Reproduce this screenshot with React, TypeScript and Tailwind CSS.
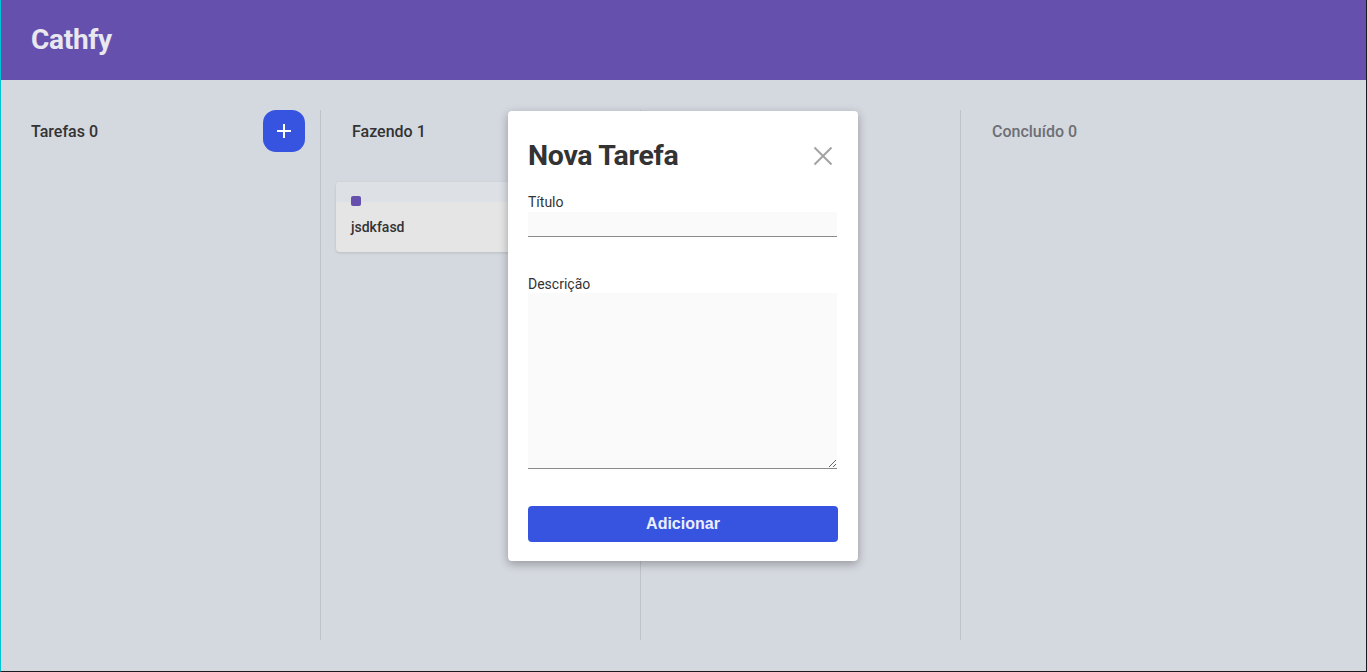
import React, { useState } from "react";

interface Task {
  id: string;
  title: string;
}

interface Column {
  id: string;
  title: string;
  tasks: Task[];
  muted?: boolean;
}

const columns: Column[] = [
  { id: "todo", title: "Tarefas", tasks: [] },
  { id: "doing", title: "Fazendo", tasks: [{ id: "1", title: "jsdkfasd" }] },
  { id: "review", title: "", tasks: [] },
  { id: "done", title: "Concluído", tasks: [], muted: true },
];

const TaskCard: React.FC<{ task: Task }> = ({ task }) => (
  <div className="rounded-[4px] overflow-hidden bg-[#e5e5e6] shadow-[0_1px_3px_rgba(0,0,0,0.12)]">
    <div className="h-[20px] bg-[#dde0e5]" />
    <div className="relative px-[15px] pt-[15px] pb-[15px]">
      <span className="absolute left-[15px] top-[-6px] w-[10px] h-[10px] rounded-[2px] bg-[#6650ae]" />
      <p className="text-[14px] leading-[20px] font-medium text-[#333]">{task.title}</p>
    </div>
  </div>
);

const App: React.FC = () => {
  const [title, setTitle] = useState("");
  const [description, setDescription] = useState("");

  return (
    <div
      className="relative h-screen flex flex-col border-l border-l-[#00c4d6] border-r border-r-[#1b1b1f] border-b border-b-[#1b1b1f] bg-[#d4d8df]"
      style={{ fontFamily: "Roboto, 'Liberation Sans', sans-serif" }}
    >
      {/* Header */}
      <header className="h-[80px] shrink-0 bg-[#6650ae] flex items-center px-[30px]">
        <h1 className="text-[28px] font-bold text-[#e9e8ef] tracking-[-0.3px]">Cathfy</h1>
      </header>

      {/* Board */}
      <main className="flex-1 flex pt-[30px] pb-[31px]">
        {columns.map((col, i) => (
          <section
            key={col.id}
            className={`${i < 3 ? "w-[320px] border-r border-r-[#bfc3c8]" : "flex-1"} flex flex-col px-[15px]`}
          >
            <div className="h-[42px] flex items-center justify-between">
              <h2
                className={`${i === 0 ? "pl-[15px]" : "pl-[16px]"} mt-[2px] text-[16px] font-medium ${col.muted ? "text-[#6d6f73]" : "text-[#333]"}`}
              >
                {col.title ? `${col.title} ${col.tasks.length}` : ""}
              </h2>
              {i === 0 && (
                <button className="w-[42px] h-[42px] rounded-[13px] bg-[#3754e0] flex items-center justify-center">
                  <svg width="18" height="18" viewBox="0 0 18 18" fill="none" stroke="#fff" strokeWidth="2">
                    <path d="M9 2v14M2 9h14" />
                  </svg>
                </button>
              )}
            </div>
            <div className="mt-[30px] flex flex-col gap-[12px]">
              {col.tasks.map((t) => (
                <TaskCard key={t.id} task={t} />
              ))}
            </div>
          </section>
        ))}
      </main>

      {/* Modal */}
      <div className="absolute left-[507px] top-[111px] w-[350px] bg-white rounded-[4px] shadow-[0_3px_10px_rgba(0,0,0,0.3)] px-[20px] pt-[20px] pb-[19px]">
        <div className="h-[48px] flex items-center justify-between">
          <h3 className="mt-[2px] text-[28.5px] font-bold text-[#333] tracking-[-0.3px]">Nova Tarefa</h3>
          <button className="mr-[5px] mt-[1px] w-[20px] h-[20px] flex items-center justify-center">
            <svg width="20" height="20" viewBox="0 0 20 20" fill="none" stroke="#a3a3a3" strokeWidth="2">
              <path d="M1.5 1.5l17 17M18.5 1.5l-17 17" />
            </svg>
          </button>
        </div>

        <label className="block mt-[15px] mb-[2px] text-[14px] leading-[16px] text-[#333]">Título</label>
        <input
          value={title}
          onChange={(e) => setTitle(e.target.value)}
          className="block w-[309px] h-[25px] bg-[#fafafa] border-b border-b-[#8a8a8a] outline-none px-[4px] text-[14px]"
        />

        <label className="block mt-[39px] mb-[1px] text-[14px] leading-[16px] text-[#333]">Descrição</label>
        <textarea
          value={description}
          onChange={(e) => setDescription(e.target.value)}
          className="block w-[309px] h-[176px] bg-[#fafafa] border-b border-b-[#8a8a8a] outline-none p-[4px] text-[14px]"
        />

        <button
          className="mt-[37px] w-[310px] h-[36px] rounded-[4px] bg-[#3754e0] text-[16px] font-bold text-[#eceefe]"
          style={{ fontFamily: "'Liberation Sans', Arial, sans-serif" }}
        >
          Adicionar
        </button>
      </div>
    </div>
  );
};

export default App;
